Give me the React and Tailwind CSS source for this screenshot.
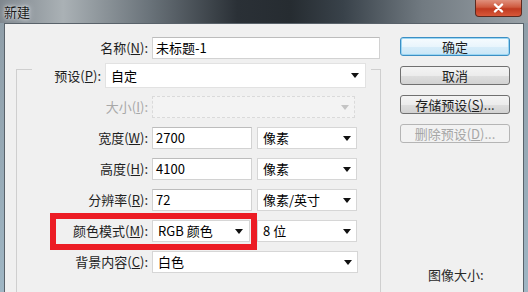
import React from 'react';

const Arrow = ({ disabled }) => (
  <span
    className={`inline-block w-0 h-0 border-x-[4px] border-x-transparent border-t-[5px] ${
      disabled ? 'border-t-[#c4c4c4]' : 'border-t-[#111]'
    }`}
  />
);

const Select = ({ value, className = '', disabled }) => (
  <div
    className={`h-[22px] flex items-center justify-between pl-[5px] pr-[5px] border ${
      disabled ? 'bg-[#f3f3f3] border-[#dadada] border-dashed' : 'bg-white border-[#d6d6d6]'
    } ${className}`}
  >
    <span>{value}</span>
    <Arrow disabled={disabled} />
  </div>
);

const Input = ({ value, className = '' }) => (
  <div className={`h-[22px] flex items-center pl-[3px] bg-white border border-[#d2d2d2] border-t-[#bcbcbc] ${className}`}>
    {value}
  </div>
);

const Label = ({ children, disabled, className = 'w-[131px]' }) => (
  <div className={`${className} text-right shrink-0 ${disabled ? 'text-[#a8a8a8]' : 'text-[#1e1e1e]'}`}>
    {children}
  </div>
);

const Button = ({ children, primary, disabled }) => {
  let look = 'border-[#707070] bg-[linear-gradient(#f4f4f4_0%,#ececec_50%,#dedede_51%,#d2d2d2_100%)] text-[#1e1e1e]';
  if (primary) look = 'border-[#3c8fc4] bg-[linear-gradient(#f6fbfe_0%,#e9f5fc_50%,#d8edf9_51%,#c9e6f7_100%)] shadow-[inset_0_0_0_1px_#9ad6f3] text-[#1e1e1e]';
  if (disabled) look = 'border-[#b5b5b5] bg-[#f2f2f2] text-[#a6a6a6]';
  return (
    <div className={`w-[110px] h-[19px] rounded-[3px] border flex items-center justify-center ${look}`}>
      {children}
    </div>
  );
};

export default function App() {
  return (
    <div className="w-[528px] h-[292px] overflow-hidden flex flex-col bg-[linear-gradient(#8e9ca6,#9fb6c4)] font-['Noto_Sans_CJK_SC','Noto_Sans',sans-serif] text-[13px] leading-[16px]">
      {/* Title bar */}
      <div className="h-[23px] shrink-0 flex items-start justify-between bg-[linear-gradient(90deg,#7f878e_0%,#aab1b5_12%,#6b747b_28%,#2a3036_45%,#262c31_55%,#39424a_65%,#717a81_80%,#9aa2a8_100%)]">
        <div className="ml-[4px] mt-[4px] text-[#1a1a1a] [text-shadow:0_0_6px_#e8ecef,0_0_3px_#e8ecef]">新建</div>
        <div className="mr-[6px] w-[47px] h-[17px] rounded-b-[4px] border border-t-0 border-[#5c2a20] flex items-center justify-center bg-[linear-gradient(#e0907d_0%,#cf5a3f_45%,#c03a20_55%,#d8583a_100%)]">
          <svg width="11" height="10" viewBox="0 0 11 10">
            <path d="M2 1.5 L9 8.5 M9 1.5 L2 8.5" stroke="#fff" strokeWidth="2.4" strokeLinecap="round" />
          </svg>
        </div>
      </div>

      {/* Body */}
      <div className="flex-1 mx-[4px] border border-b-0 border-[#59626a] bg-[#f0f0f0] flex">
        {/* Left form column */}
        <div className="w-[376px] flex flex-col">
          <div className="mt-[13px] flex items-center">
            <Label className="w-[143px]">名称(<u>N</u>):</Label>
            <Input value="未标题-1" className="ml-[4px] w-[228px]" />
          </div>

          <div className="mt-[10px] ml-[11px] flex-1 border border-b-0 border-[#cfcfcf] flex flex-col">
            {/* Preset as legend */}
            <div className="-mt-[7px] ml-[15px] self-start bg-[#f0f0f0] flex items-center pr-[5px]">
              <Label className="w-[69px]">预设(<u>P</u>):</Label>
              <Select value="自定" className="ml-[4px] w-[261px] h-[25px] border-[#e2e2e2] pr-[6px]" />
            </div>

            <div className="mt-[8px] flex flex-col gap-[9px]">
              <div className="flex items-center">
                <Label disabled>大小(<u>I</u>):</Label>
                <Select value="" disabled className="ml-[4px] w-[203px]" />
              </div>
              <div className="flex items-center">
                <Label>宽度(<u>W</u>):</Label>
                <Input value="2700" className="ml-[4px] w-[100px]" />
                <Select value="像素" className="ml-[5px] w-[100px]" />
              </div>
              <div className="flex items-center">
                <Label>高度(<u>H</u>):</Label>
                <Input value="4100" className="ml-[4px] w-[100px]" />
                <Select value="像素" className="ml-[5px] w-[100px]" />
              </div>
              <div className="flex items-center">
                <Label>分辨率(<u>R</u>):</Label>
                <Input value="72" className="ml-[4px] w-[100px]" />
                <Select value="像素/英寸" className="ml-[5px] w-[100px]" />
              </div>
              <div className="relative flex items-center">
                <Label>颜色模式(<u>M</u>):</Label>
                <Select value="RGB 颜色" className="ml-[4px] w-[98px] pr-[6px]" />
                <Select value="8 位" className="ml-[7px] w-[100px]" />
                {/* red annotation box */}
                <div className="absolute left-[33px] -top-[7px] w-[207px] h-[37px] border-[6px] border-[#ec1c24]" />
              </div>
              <div className="flex items-center">
                <Label>背景内容(<u>C</u>):</Label>
                <Select value="白色" className="ml-[4px] w-[206px]" />
              </div>
            </div>
          </div>
        </div>

        {/* Right button column */}
        <div className="flex-1 flex flex-col">
          <div className="mt-[13px] ml-[19px] flex flex-col gap-[10px]">
            <Button primary>确定</Button>
            <Button>取消</Button>
            <Button>存储预设(<u>S</u>)...</Button>
            <Button disabled>删除预设(<u>D</u>)...</Button>
          </div>
          <div className="mt-auto mb-[9px] ml-[47px] text-[#2a2a2a]">图像大小:</div>
        </div>
      </div>
    </div>
  );
}
